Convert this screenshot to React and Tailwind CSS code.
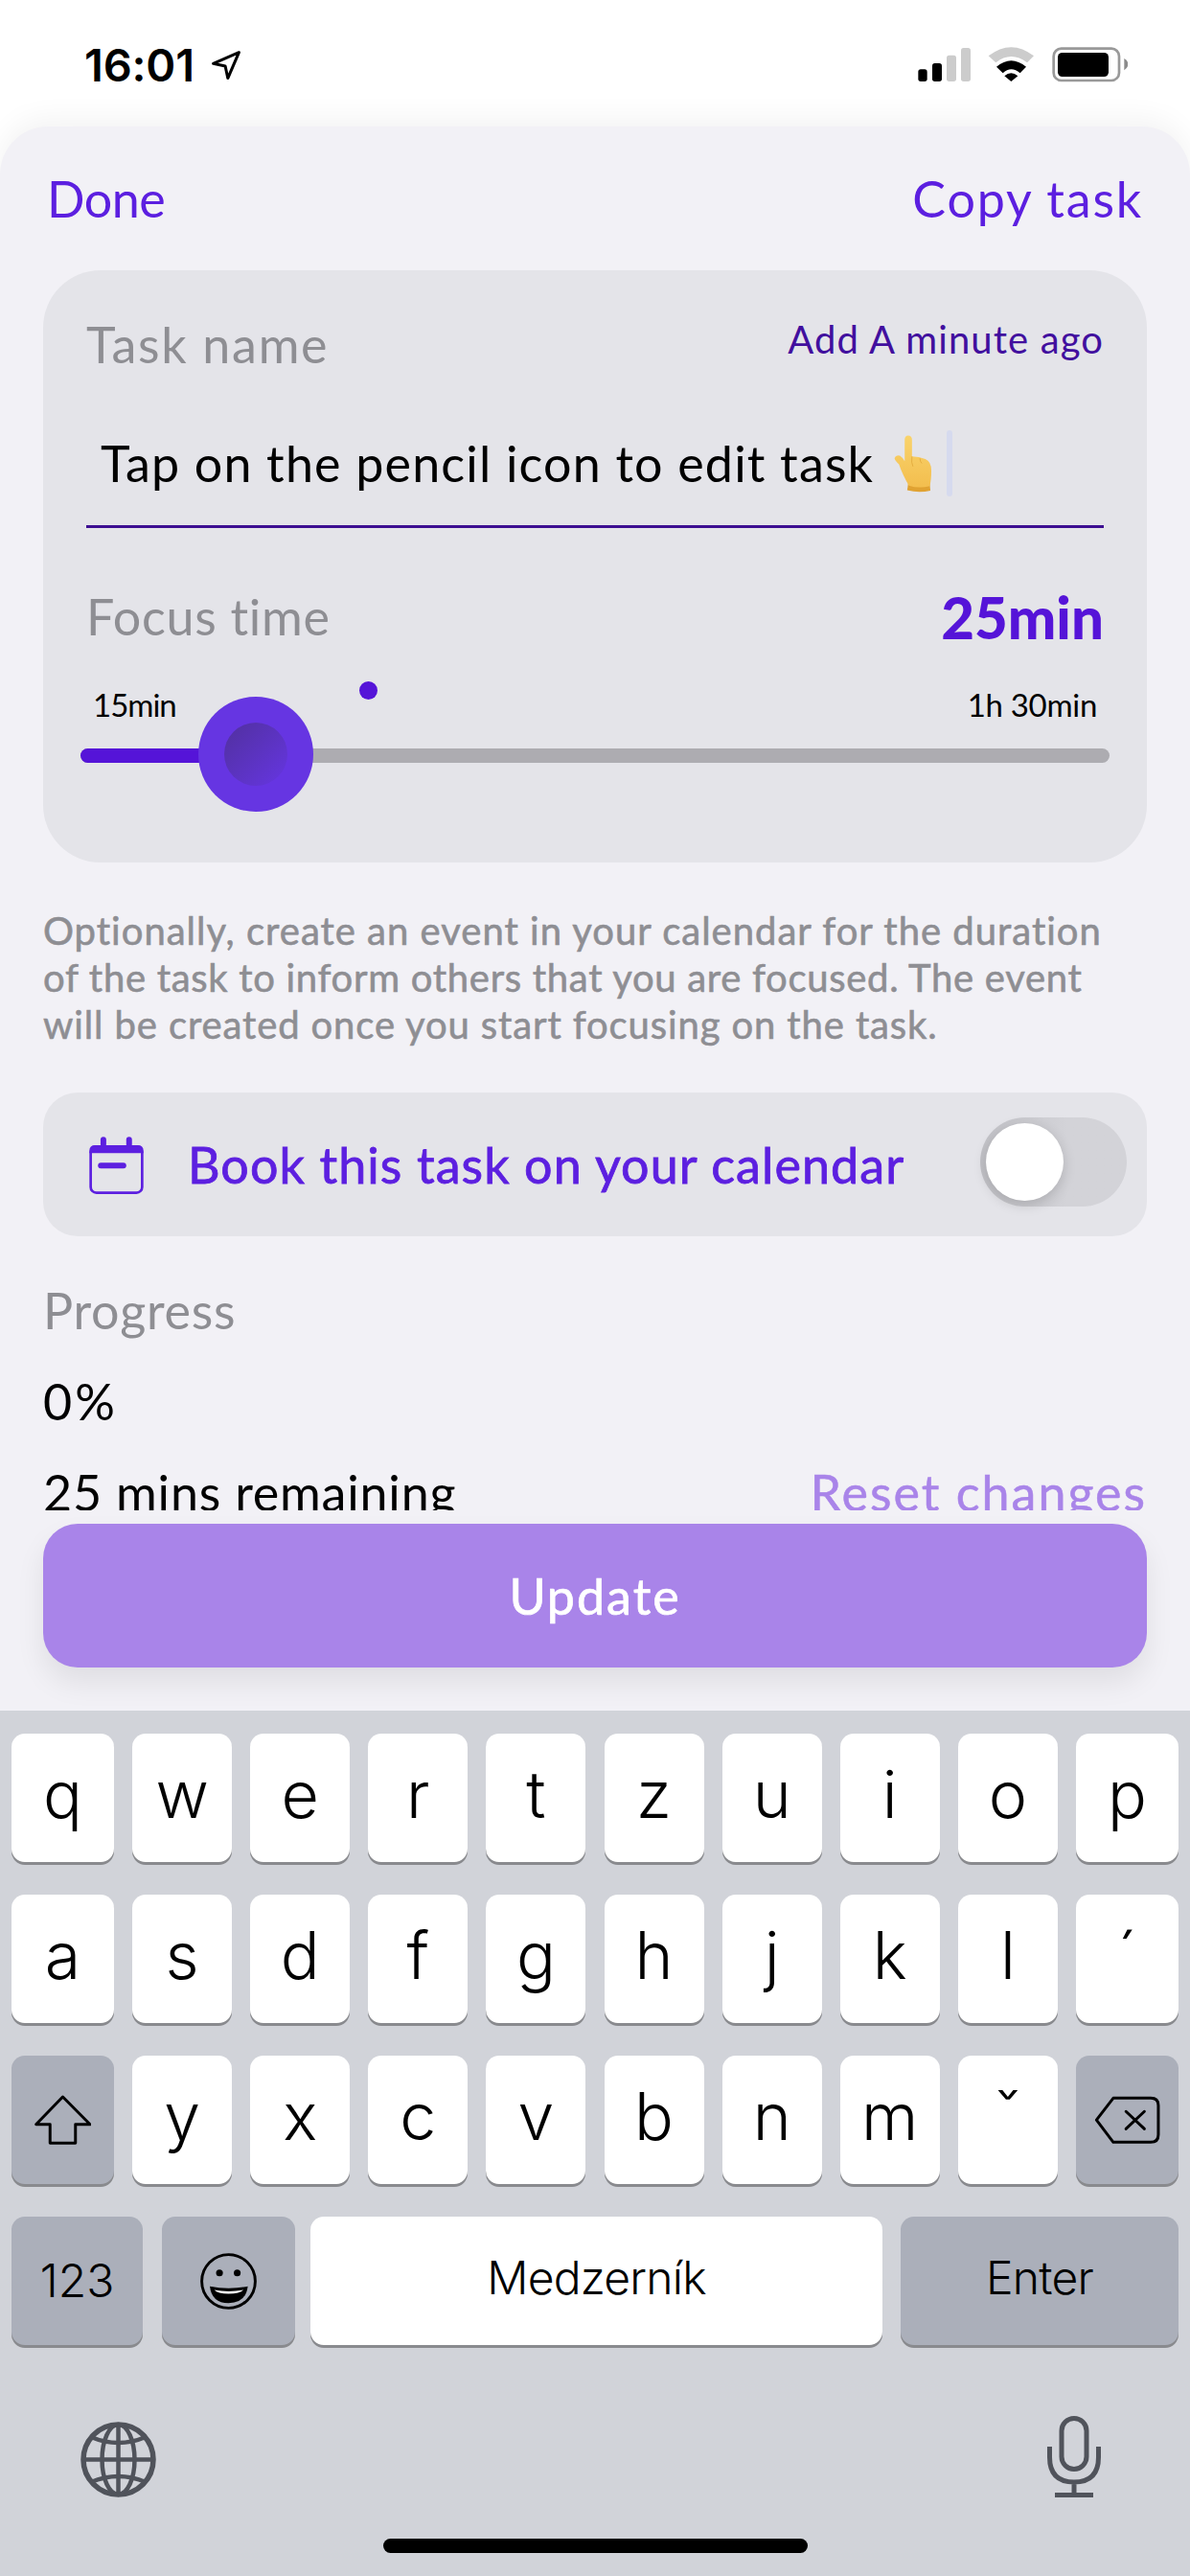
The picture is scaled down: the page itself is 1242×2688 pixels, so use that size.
const Key = ({ children, dark, className = "" }) => (
  <div className={`h-[134px] rounded-[14px] flex items-center justify-center shrink-0 shadow-[0_3px_0_#898a8e] font-['Inter',sans-serif] text-black ${dark ? "bg-[#abafba]" : "bg-white"} ${className}`}>
    {children}
  </div>
);

const Letter = ({ c, edge }) => (
  <Key className={edge ? "w-[107px]" : "w-[104px]"}>
    <span className="text-[68px] font-light leading-[80px] pb-[9px]">{c}</span>
  </Key>
);

const LetterRow = ({ keys }) => (
  <div className="mt-[34px] first:mt-0 px-[12px] flex justify-between">
    {keys.map((c, i) => <Letter key={c} c={c} edge={i === 0 || i === keys.length - 1} />)}
  </div>
);

const StatusBar = () => (
  <div className="h-[132px] shrink-0 pl-[88px] pr-[65px] pt-[41px] flex justify-between items-start bg-white">
    <div className="flex items-start">
      <span className="font-['Inter',sans-serif] font-semibold text-[47px] leading-[54px] tracking-[-0.2px] text-black">16:01</span>
      <svg width="34" height="36" viewBox="220 51 38 38" className="ml-[16px] mt-[10px]">
        <path d="M254 54 L224 67 L238 70 L241 84 Z" fill="none" stroke="#000" strokeWidth="3.4" strokeLinejoin="round" />
      </svg>
    </div>
    <svg width="219" height="38" viewBox="174 84 657 114" className="mt-[7px]">
      <rect x="175" y="157" width="28" height="38" rx="8" fill="#000" />
      <rect x="219" y="138" width="30" height="57" rx="8" fill="#000" />
      <rect x="264" y="113" width="30" height="82" rx="8" fill="#ccc" />
      <rect x="309" y="90" width="30" height="105" rx="8" fill="#ccc" />
      <path d="M395 115 Q466 60 537 115 L516 136 Q466 98 418 136 Z" fill="#ccc" />
      <path d="M420 149 Q466 110 513 149 L494 169 Q466 144 440 169 Z" fill="#000" />
      <path d="M445 178 Q466 160 487 178 L466 195 Z" fill="#000" />
      <rect x="599" y="92" width="205" height="100" rx="24" fill="none" stroke="#999" strokeWidth="8" />
      <rect x="612" y="105" width="159" height="75" rx="14" fill="#000" />
      <path d="M820 123 Q832 130 832 141 Q832 152 820 160 Z" fill="#8b8b8b" />
    </svg>
  </div>
);

const HandEmoji = () => (
  <svg width="43" height="63" viewBox="90 70 130 190" className="mt-[1px] ml-[19px] shrink-0">
    <defs>
      <linearGradient id="hand" x1="0" y1="0" x2="0" y2="1">
        <stop offset="0" stopColor="#f9d36c" />
        <stop offset="1" stopColor="#f3be4e" />
      </linearGradient>
    </defs>
    <path d="M141 225 L209 225 L211 248 Q175 256 138 247 Z" fill="#e0a232" />
    <path d="M130 88 Q130 74 141 74 Q153 74 153 88 L153 140 Q175 140 195 148 Q214 155 214 185 Q214 215 209 234 Q175 242 143 232 Q122 195 112 165 Q98 152 98 145 Q102 134 115 138 Q125 145 130 155 Z" fill="url(#hand)" />
    <path d="M153 140 Q150 160 156 172 M178 146 Q178 156 184 162" fill="none" stroke="#e2a93c" strokeWidth="2.5" />
  </svg>
);

const CalendarIcon = () => (
  <svg width="63" height="67" viewBox="60 70 190 200" className="shrink-0">
    <rect x="74" y="112" width="162" height="146" rx="18" fill="none" stroke="#5c1fe0" strokeWidth="8" />
    <path d="M70 133 V126 Q70 108 88 108 H222 Q240 108 240 126 V133 Z" fill="#5c1fe0" />
    <rect x="105" y="82" width="18" height="32" rx="9" fill="#5c1fe0" />
    <rect x="186" y="82" width="18" height="32" rx="9" fill="#5c1fe0" />
    <rect x="97" y="163" width="89" height="18" rx="9" fill="#5c1fe0" />
  </svg>
);

const Slider = () => (
  <div className="relative mt-[26px] -mx-[6px] h-[15px] rounded-full bg-[#adacb1]">
    <div className="h-full w-[140px] rounded-l-full bg-[#5514d8]" />
    <div className="absolute left-[123px] top-[-54px] w-[120px] h-[120px] rounded-full bg-[#6635e2] flex items-center justify-center">
      <div className="w-[66px] h-[66px] rounded-full bg-gradient-to-br from-[#51309f] to-[#6635e2]" />
    </div>
    <div className="absolute left-[291px] top-[-70px] w-[19px] h-[19px] rounded-full bg-[#5514d8]" />
  </div>
);

const Form = () => (
  <div className="h-[1444px] shrink-0 overflow-hidden font-['Lato',sans-serif]">
    <div className="flex justify-between pl-[49px] pr-[49px] pt-[45px] text-[52px] leading-[60px] text-[#5c1fe0]">
      <span className="tracking-[-0.5px]">Done</span>
      <span className="tracking-[1.8px]">Copy task</span>
    </div>

    <div className="mx-[45px] mt-[45px] h-[618px] rounded-[60px] bg-[#e4e4e9] px-[45px] pt-[47px]">
      <div className="flex justify-between items-start">
        <span className="text-[52px] leading-[60px] tracking-[1.7px] text-[#8e8e93]">Task name</span>
        <span className="text-[40px] leading-[48px] mt-[1px] tracking-[1.1px] text-[#410f9e]">Add A minute ago</span>
      </div>
      <div className="mt-[63px] pb-[34px] border-b-[3px] border-[#3d0e91] pl-[15px] flex items-start h-[99px]">
        <span className="text-[52px] leading-[62px] tracking-[1.17px] text-black whitespace-nowrap">Tap on the pencil icon to edit task</span>
        <HandEmoji />
        <div className="w-[6px] h-[69px] -mt-[3px] ml-[14px] rounded-full bg-[#d6daee] shrink-0" />
      </div>
      <div className="mt-[62px] h-[68px] flex justify-between items-start">
        <span className="text-[52px] leading-[60px] tracking-[0.7px] text-[#8e8e93]">Focus time</span>
        <span className="text-[60px] leading-[70px] -mt-[4px] font-black text-[#5514d8]">25min</span>
      </div>
      <div className="mt-[34px] px-[7px] flex justify-between text-[33px] leading-[40px] text-black">
        <span className="tracking-[-1px]">15min</span>
        <span className="tracking-[-0.3px]">1h 30min</span>
      </div>
      <Slider />
    </div>

    <p className="mx-[45px] mt-[47px] text-[40px] leading-[49px] text-[#8e8e93] [-webkit-text-stroke:0.6px_#8e8e93]">
      <span className="block whitespace-nowrap tracking-[1px]">Optionally, create an event in your calendar for the duration</span>
      <span className="block whitespace-nowrap tracking-[0.7px]">of the task to inform others that you are focused. The event</span>
      <span className="block whitespace-nowrap tracking-[0.88px]">will be created once you start focusing on the task.</span>
    </p>

    <div className="mx-[45px] mt-[46px] h-[150px] rounded-[36px] bg-[#e4e4e9] flex items-center pl-[45px] pr-[21px]">
      <CalendarIcon />
      <span className="ml-[43px] text-[52px] leading-[62px] tracking-[1.1px] text-[#5c1fe0] [-webkit-text-stroke:0.8px_#5c1fe0] whitespace-nowrap">Book this task on your calendar</span>
      <div className="ml-auto w-[153px] h-[93px] rounded-full bg-gradient-to-r from-[#c2c2c7] to-[#d3d3d8] to-60% flex items-center pl-[6px] -mt-[5px]">
        <div className="w-[81px] h-[81px] rounded-full bg-white shadow-[0_4px_14px_rgba(0,0,0,0.16)]" />
      </div>
    </div>

    <div className="mx-[45px] mt-[47px] text-[52px] leading-[60px] tracking-[0.75px] text-[#8e8e93]">Progress</div>
    <div className="mx-[45px] mt-[35px] text-[52px] leading-[60px] tracking-[3px] text-black">0%</div>
    <div className="mx-[45px] mt-[35px] flex justify-between text-[52px] leading-[60px]">
      <span className="text-black tracking-[0.8px]">25 mins remaining</span>
      <span className="text-[#a984e9] tracking-[2px] [-webkit-text-stroke:0.5px_#a984e9]">Reset changes</span>
    </div>
  </div>
);

const Keyboard = () => (
  <div className="h-[903px] shrink-0 bg-[#d1d3d9] pt-[24px] font-['Inter',sans-serif]">
    <LetterRow keys={["q", "w", "e", "r", "t", "z", "u", "i", "o", "p"]} />
    <LetterRow keys={["a", "s", "d", "f", "g", "h", "j", "k", "l", "´"]} />
    <div className="mt-[34px] px-[12px] flex justify-between">
      <Key dark className="w-[107px]">
        <svg width="59" height="53" viewBox="108 146 178 156">
          <path d="M197 150 L283 237 H237 V296 H157 V237 H113 Z" fill="none" stroke="#000" strokeWidth="9" strokeLinejoin="round" />
        </svg>
      </Key>
      {["y", "x", "c", "v", "b", "n", "m", "ˇ"].map((c) => <Letter key={c} c={c} />)}
      <Key dark className="w-[107px]">
        <svg width="69" height="51" viewBox="180 146 208 154">
          <path d="M187 222 L240 153 H358 Q382 153 382 176 V268 Q382 292 358 292 H240 Z" fill="none" stroke="#000" strokeWidth="9" strokeLinejoin="round" />
          <path d="M280 195 L338 250 M338 195 L280 250" fill="none" stroke="#000" strokeWidth="9" strokeLinecap="round" />
        </svg>
      </Key>
    </div>
    <div className="mt-[34px] px-[12px] flex">
      <Key dark className="w-[137px]">
        <span className="text-[48px] font-light leading-[58px] pb-[1px]">123</span>
      </Key>
      <Key dark className="w-[139px] ml-[20px]">
        <svg width="61" height="61" viewBox="620 628 188 188">
          <circle cx="714" cy="722" r="86" fill="none" stroke="#000" strokeWidth="9" />
          <circle cx="685" cy="695" r="11" fill="#000" />
          <circle cx="742" cy="695" r="11" fill="#000" />
          <path d="M654 738 Q714 750 776 738 Q770 792 714 792 Q660 792 654 738 Z" fill="#000" />
          <path d="M668 750 Q714 758 762 750 Q750 762 714 762 Q680 762 668 750 Z" fill="#fff" />
        </svg>
      </Key>
      <Key className="w-[597px] ml-[16px]">
        <span className="text-[48px] font-light leading-[58px] tracking-[-0.8px] pb-[7px]">Medzerník</span>
      </Key>
      <Key dark className="w-[290px] ml-[19px]">
        <span className="text-[48px] font-light leading-[58px] tracking-[-0.8px] pb-[7px]">Enter</span>
      </Key>
    </div>
    <div className="mt-[74px] h-[85px] flex justify-between items-end pl-[84px] pr-[93px]">
      <svg width="79" height="79" viewBox="0 0 79 79" fill="none" stroke="#50535b" strokeWidth="4.5">
        <circle cx="39.5" cy="39.5" r="36.5" strokeWidth="5.5" />
        <ellipse cx="39.5" cy="39.5" rx="17" ry="36.5" />
        <path d="M39.5 3 V76 M3 39.5 H76" />
        <path d="M11 16 Q39.5 28 68 16 M11 63 Q39.5 51 68 63" />
      </svg>
      <svg width="56" height="85" viewBox="0 0 56 85" fill="none" stroke="#50535b" strokeWidth="5">
        <rect x="15" y="2.5" width="26" height="53" rx="13" />
        <path d="M2.5 32 V43 Q2.5 69 28 69 Q53.5 69 53.5 43 V32 M28 69 V81" />
        <path d="M8 82.5 H48" strokeWidth="5" />
      </svg>
    </div>
    <div className="mt-[43px] mx-auto w-[443px] h-[15px] rounded-full bg-black" />
  </div>
);

export default function App() {
  return (
    <div className="w-[1242px] h-[2688px] overflow-hidden flex flex-col bg-white">
      <StatusBar />
      <div className="flex-1 flex flex-col rounded-t-[50px] bg-[#f2f1f6] shadow-[0_-8px_30px_rgba(0,0,0,0.05)]">
        <Form />
        <button className="mx-[45px] mt-[14px] h-[150px] shrink-0 rounded-[36px] bg-[#a984e9] text-white text-[52px] leading-[62px] tracking-[2px] font-['Lato',sans-serif] [-webkit-text-stroke:0.7px_#ffffff] shadow-[0_16px_30px_rgba(0,0,0,0.08)]">
          Update
        </button>
        <div className="flex-1" />
        <Keyboard />
      </div>
    </div>
  );
}
